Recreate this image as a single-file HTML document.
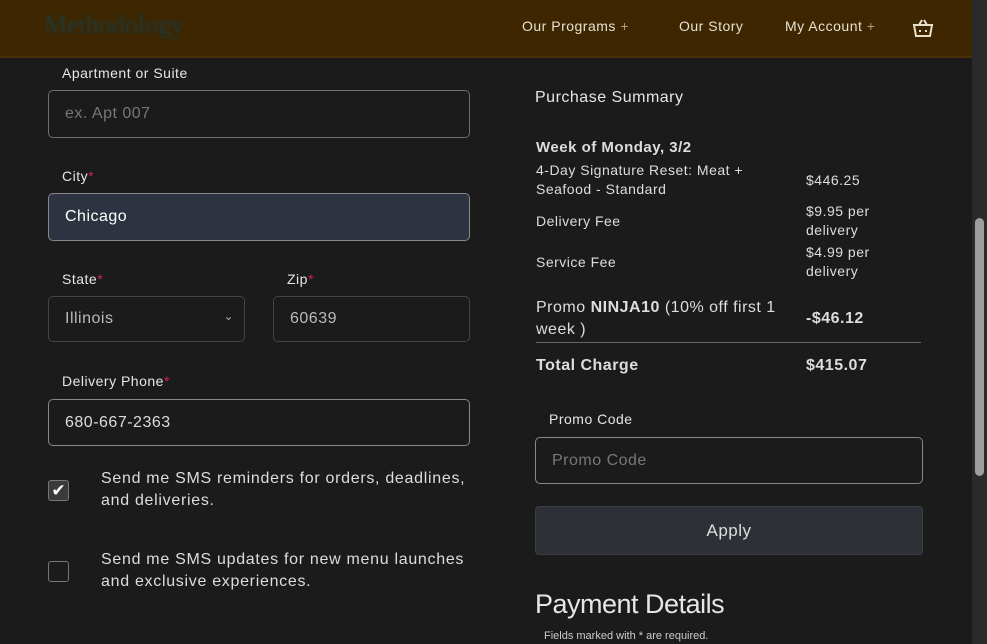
<!DOCTYPE html>
<html><head><meta charset="utf-8"><style>
*{box-sizing:border-box;margin:0;padding:0}
body{width:987px;height:644px;overflow:hidden;background:#1b1b1c;font-family:"Liberation Sans",sans-serif;color:#e6e6e6;position:relative;letter-spacing:0.5px}
.hdr{position:absolute;left:0;top:0;width:972px;height:58px;background:#3d2600;border-bottom:2px solid #4a2e0a}
.logo{position:absolute;left:44px;top:10px;font-family:"Liberation Serif",serif;font-size:26px;color:#1f3a3c;filter:blur(1.2px);letter-spacing:0}
.nav{position:absolute;top:18px;font-size:14px;color:#e8e0d0}
.nav b{color:#b89a70;font-weight:normal}
.a{position:absolute}
.lbl{position:absolute;font-size:14px;color:#e6e6e6}
.lbl i{color:#d0205a;font-style:normal}
.inp{position:absolute;border:1px solid #6e6e6e;border-radius:5px;font-size:16px;color:#ddd;padding-left:16px;display:flex;align-items:center}
.sb{position:absolute;right:0;top:0;width:15px;height:644px;background:#2a2a2a}
.sbt{position:absolute;right:3px;top:218px;width:9px;height:258px;background:#9d9d9d;border-radius:5px}
.r{position:absolute;font-size:14px;color:#ddd;line-height:19px}
</style></head><body>
<div class="hdr">
<div class="logo">Methodology</div>
<div class="nav" style="left:522px">Our Programs <b>+</b></div>
<div class="nav" style="left:679px">Our Story</div>
<div class="nav" style="left:785px">My Account <b>+</b></div>
<svg class="a" style="left:912px;top:17px" width="22" height="22" viewBox="0 0 22 22" fill="none" stroke="#eadfcf" stroke-width="2"><path d="M2 8h18l-2 11H4z"/><path d="M7 8l3-5M15 8l-3-5"/><path d="M8 13v2M14 13v2"/></svg>
</div>

<div class="lbl" style="left:62px;top:65px">Apartment or Suite</div>
<div class="inp" style="left:48px;top:90px;width:422px;height:48px;color:#777">ex. Apt 007</div>
<div class="lbl" style="left:62px;top:168px">City<i>*</i></div>
<div class="inp" style="left:48px;top:193px;width:422px;height:48px;background:#2d3340;border-color:#888;color:#fff">Chicago</div>
<div class="lbl" style="left:62px;top:271px">State<i>*</i></div>
<div class="inp" style="left:48px;top:296px;width:197px;height:46px;border-color:#444;color:#bbb">Illinois<span style="position:absolute;right:10px;top:12px;font-size:12px;color:#aaa">&#8964;</span></div>
<div class="lbl" style="left:287px;top:271px">Zip<i>*</i></div>
<div class="inp" style="left:273px;top:296px;width:197px;height:46px;border-color:#444;color:#bbb">60639</div>
<div class="lbl" style="left:62px;top:373px">Delivery Phone<i>*</i></div>
<div class="inp" style="left:48px;top:399px;width:422px;height:47px;border-color:#888">680-667-2363</div>

<div class="a" style="left:48px;top:480px;width:21px;height:21px;border:1px solid #777;border-radius:3px;background:#3a3a3a;color:#fff;font-size:17px;line-height:19px;text-align:center;letter-spacing:0">&#10004;</div>
<div class="r" style="left:101px;top:468px;font-size:16px;line-height:22px;letter-spacing:0.7px">Send me SMS reminders for orders, deadlines,<br>and deliveries.</div>
<div class="a" style="left:48px;top:561px;width:21px;height:21px;border:1px solid #777;border-radius:3px"></div>
<div class="r" style="left:101px;top:549px;font-size:16px;line-height:22px;letter-spacing:0.7px">Send me SMS updates for new menu launches<br>and exclusive experiences.</div>

<div class="r" style="left:535px;top:88px;font-size:16px;color:#e6e6e6">Purchase Summary</div>
<div class="r" style="left:536px;top:138px;font-size:15px;font-weight:bold">Week of Monday, 3/2</div>
<div class="r" style="left:536px;top:161px">4-Day Signature Reset: Meat +<br>Seafood - Standard</div>
<div class="r" style="left:806px;top:171px">$446.25</div>
<div class="r" style="left:536px;top:212px">Delivery Fee</div>
<div class="r" style="left:806px;top:202px">$9.95 per<br>delivery</div>
<div class="r" style="left:536px;top:253px">Service Fee</div>
<div class="r" style="left:806px;top:243px">$4.99 per<br>delivery</div>
<div class="r" style="left:536px;top:297px;font-size:16px;line-height:22px">Promo <b>NINJA10</b> (10% off first 1<br>week )</div>
<div class="r" style="left:806px;top:309px;font-size:16px;font-weight:bold">-$46.12</div>
<div class="a" style="left:536px;top:342px;width:385px;height:1px;background:#666"></div>
<div class="r" style="left:536px;top:356px;font-size:16px;font-weight:bold">Total Charge</div>
<div class="r" style="left:806px;top:356px;font-size:16px;font-weight:bold">$415.07</div>

<div class="lbl" style="left:549px;top:411px">Promo Code</div>
<div class="inp" style="left:535px;top:437px;width:388px;height:47px;border-color:#888;color:#777">Promo Code</div>
<div class="a" style="left:535px;top:506px;width:388px;height:49px;background:#2d3036;border:1px solid #3a3d44;border-radius:4px;font-size:17px;color:#ddd;text-align:center;line-height:47px">Apply</div>
<div class="a" style="left:535px;top:589px;font-family:'Liberation Sans',sans-serif;font-size:27px;color:#e6e6e6;letter-spacing:-0.5px">Payment Details</div>
<div class="a" style="left:544px;top:630px;font-size:11px;color:#ccc;letter-spacing:0">Fields marked with * are required.</div>

<div class="sb"><div class="sbt"></div></div>
</body></html>
